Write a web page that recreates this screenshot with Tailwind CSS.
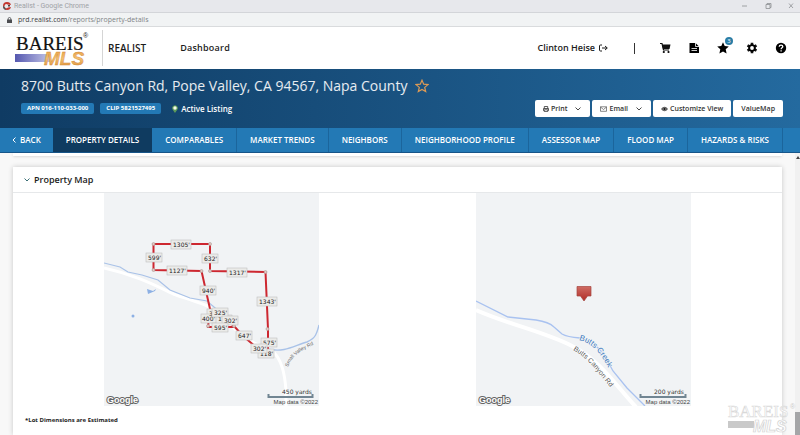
<!DOCTYPE html>
<html lang="en">
<head>
<meta charset="utf-8">
<title>Realist</title>
<script src="https://cdn.jsdelivr.net/npm/@tailwindcss/browser@4"></script>
</head>
<body class="flex h-screen flex-col overflow-hidden bg-[#f8f8f8] font-['Open_Sans','Noto_Sans',sans-serif] text-[9px] leading-3 text-[#1c1c1c]">

<!-- Browser chrome -->
<div class="flex h-[13px] shrink-0 items-center border-b border-[#d3d5d9] bg-[#e7e8ec] pl-[3px] font-[Roboto,sans-serif] text-[7px] text-[#a0a2a6]">
  <svg class="h-2 w-2" viewBox="0 0 8 8"><circle cx="4" cy="4" r="4" fill="#c3372f"/><path d="M3 8A4 4 0 0 1 0 4l2 1z" fill="#4b5b58"/><path d="M8 3L4.500 2.500A2 2 0 1 0 5 5.500L8 5z" fill="#e7e8ec"/><path d="M7 3L5 3v1.500h2z" fill="#4a4546"/></svg>
  <span class="ml-[3px]">Realist - Google Chrome</span>
  <svg class="mr-1 ml-auto h-2 w-[58px]" viewBox="0 0 58 8" fill="none" stroke="#8d8f93" stroke-width=".8"><path d="M4 4h5M51 1.500l4 4.500M55 1.500l-4 4.500"/><path d="M28 2.500h4v4h-4zM29 2.500v-1h4v4h-1"/></svg>
</div>
<div class="flex h-[14px] shrink-0 items-center border-b border-[#d9dbdd] bg-[#f1f3f4] pl-[7px] text-[7px] text-[#3e4043]">
  <svg class="h-[6px] w-[5px]" viewBox="0 0 5 6"><path d="M0 2.500h5V6H0z" fill="#4b4d50"/><path d="M1.200 3V1.800a1.300 1.300 0 0 1 2.600 0V3" fill="none" stroke="#4b4d50" stroke-width=".8"/></svg>
  <span class="ml-[6px]">prd.realist.com</span><span class="text-[#808386]">/reports/property-details</span>
</div>

<!-- Site header -->
<header class="flex h-[42px] shrink-0 items-center bg-white pr-[13px] pl-[14px]">
  <svg class="h-[38px] w-[76px] overflow-visible" viewBox="0 0 76 38" role="img" aria-label="Bareis MLS">
    <defs>
      <linearGradient id="bar"><stop offset="0" stop-color="#5558b0"/><stop offset="1" stop-color="#c6c8e8"/></linearGradient>
      <linearGradient id="gold" x1="0" y1="0" x2="0" y2="1"><stop offset="0" stop-color="#e79a3c"/><stop offset=".5" stop-color="#f3c070"/><stop offset="1" stop-color="#d98b33"/></linearGradient>
    </defs>
    <rect x="1" y="25" width="36" height="8" fill="url(#bar)"/>
    <text x="2" y="21" font-family="Liberation Serif, serif" font-size="19" fill="#111" stroke="#111" stroke-width=".2">BAREIS</text>
    <text x="69" y="9" font-family="Liberation Sans, sans-serif" font-size="7" fill="#222">®</text>
    <text x="30" y="36" font-family="Liberation Sans, sans-serif" font-size="19" font-weight="700" font-style="italic" fill="url(#gold)" stroke="#d38a3a" stroke-width=".4">MLS</text>
  </svg>
  <div class="ml-3 h-9 border-l border-[#d5d5d5]"></div>
  <span class="ml-[5px] text-[10px] font-semibold">REALIST</span>
  <a href="#" class="ml-[34px] text-[9px] font-semibold tracking-wide">Dashboard</a>
  <div class="ml-auto flex items-center">
    <a href="#" class="flex items-center gap-1 text-[9px] font-semibold">Clinton Heise
      <svg class="h-2 w-[9px]" viewBox="0 0 9 8" fill="none" stroke="#1c1c1c" stroke-width="1"><path d="M3 1H1.500a1 1 0 0 0-1 1v4a1 1 0 0 0 1 1H3M3 4h5M6 2l2.300 2L6 6"/></svg>
    </a>
    <span class="mr-6 ml-[26px] h-[11px] border-l border-[#333]"></span>
    <div class="flex items-center gap-[17px]">
      <button aria-label="Cart"><svg class="block h-3 w-3" viewBox="0 0 12 12"><path d="M1 1.500h2L4.500 8H10" fill="none" stroke="#111" stroke-width="1.200"/><path d="M3 2.500h8.500L10.500 7h-6.500z" fill="#111"/><circle cx="4.800" cy="10" r="1.100"/><circle cx="9.500" cy="10" r="1.100"/></svg></button>
      <button aria-label="Reports"><svg class="block h-3 w-3" viewBox="0 0 12 12"><path d="M1.500 1h6l3.500 3.500V11h-9.500z"/><path d="M7.500 1v3.500H11M3.500 6.500h5.500M3.500 8.500h5.500" fill="none" stroke="#fff" stroke-width=".8"/></svg></button>
      <button aria-label="Favorites, 3" class="relative"><svg class="block h-3 w-3" viewBox="0 0 12 12"><path d="M6 .3l1.700 3.800 4.100.4-3.100 2.800.9 4.200L6 9.400l-3.600 2.100.9-4.200L.2 4.500l4.100-.4z"/></svg><span class="absolute -top-[5px] -right-1 h-2 w-2 rounded-full bg-[#2a7da6] text-center text-[6px] leading-2 text-white">3</span></button>
      <button aria-label="Settings"><svg class="block h-3 w-3" viewBox="0 0 12 12"><g stroke="#111" stroke-width="2.600"><path d="M6 .8v10.400M1.500 3.400l9 5.200M1.500 8.600l9-5.200"/></g><circle cx="6" cy="6" r="3.800"/><circle cx="6" cy="6" r="1.900" fill="#fff"/></svg></button>
      <button aria-label="Help"><svg class="block h-3 w-3" viewBox="0 0 12 12"><circle cx="6" cy="6" r="5.200"/><path d="M4.200 4.700C4.300 2.500 7.800 2.600 7.800 4.600 7.800 5.900 6.100 5.700 6.100 7.200M6.100 8.200v1.400" fill="none" stroke="#fff" stroke-width="1.300"/></svg></button>
    </div>
  </div>
</header>

<!-- Property banner -->
<section class="flex h-[59px] shrink-0 bg-linear-to-r from-[#0f3b63] to-[#246a9f] pr-[17px] pl-[21px] text-white">
  <div>
    <div class="mt-[7px] flex items-center gap-2">
      <h1 class="text-[14px] leading-5 font-normal text-white/90">8700 Butts Canyon Rd, Pope Valley, CA 94567, Napa County</h1>
      <button aria-label="Add to favorites"><svg class="block h-[14px] w-[14px]" viewBox="0 0 14 14" fill="none" stroke="#dc9a55" stroke-width="1.200"><path d="M7 1.200l1.700 4 4.300.4-3.300 2.800 1 4.200L7 10.400l-3.700 2.200 1-4.200L1 5.600l4.300-.4z"/></svg></button>
    </div>
    <div class="mt-[7px] flex items-center gap-[6px] text-[6px] leading-[11px] font-bold">
      <span class="rounded-xs bg-[#2379b5] px-[6px]">APN 016-110-033-000</span>
      <span class="rounded-xs bg-[#2379b5] px-[6px]">CLIP 5821527495</span>
      <span class="flex items-center gap-[3px] pl-[5px] text-[8px] font-semibold"><svg class="h-2 w-[6px]" viewBox="0 0 6 8"><path d="M3 8L.6 4.500A2.800 2.800 0 1 1 5.400 4.500z" fill="#5e9b5a"/><circle cx="3" cy="3" r="1.700" fill="#f3fbe9"/></svg>Active Listing</span>
    </div>
  </div>
  <div class="mt-[31px] ml-auto flex gap-[2px] text-[7px] font-semibold text-[#333]">
    <button class="flex h-[17px] items-center gap-[2px] rounded-xs bg-white px-2"><svg class="h-[6px] w-[6px]" viewBox="0 0 6 6" fill="none" stroke="#333" stroke-width=".8"><path d="M1.300 2.500V.5h3.400v2M1 4.500H.5v-2h5v2H5M1.300 3.800h3.400v1.800H1.300z"/></svg>Print<svg class="ml-[5px] h-[6px] w-2" viewBox="0 0 8 6" fill="none" stroke="#333" stroke-width=".9"><path d="M1.500 1.500L4 4l2.500-2.500"/></svg></button>
    <button class="flex h-[17px] items-center gap-[2px] rounded-xs bg-white px-2"><svg class="h-[6px] w-[7px]" viewBox="0 0 7 6" fill="none" stroke="#555" stroke-width=".7"><path d="M.5.800h6v4.500h-6zM.5 1l3 2.500 3-2.500"/></svg>Email<svg class="ml-[5px] h-[6px] w-2" viewBox="0 0 8 6" fill="none" stroke="#333" stroke-width=".9"><path d="M1.500 1.500L4 4l2.500-2.500"/></svg></button>
    <button class="flex h-[17px] items-center gap-[2px] rounded-xs bg-white px-2"><svg class="h-[6px] w-[7px]" viewBox="0 0 7 6"><path d="M0 3Q3.500-1.500 7 3 3.500 7.500 0 3" fill="#555"/><circle cx="3.500" cy="3" r="1.400" fill="#111" stroke="#ddd" stroke-width=".4"/></svg>Customize View</button>
    <button class="flex h-[17px] items-center rounded-xs bg-white px-2">ValueMap</button>
  </div>
</section>

<!-- Section tabs -->
<nav class="flex h-[25px] shrink-0 border-b border-[#17568a] bg-[#2379b5] text-[8px] leading-6 font-semibold whitespace-nowrap text-white">
  <a href="#" class="flex items-center gap-1 px-3"><svg class="h-[6px] w-1" viewBox="0 0 4 6" fill="none" stroke="#fff" stroke-width="1"><path d="M3.500.5L1 3l2.500 2.500"/></svg>BACK</a>
  <a href="#" class="bg-[#0f3b60] px-[13px]">PROPERTY DETAILS</a>
  <a href="#" class="border-r border-[#1b659c] px-[13px]">COMPARABLES</a>
  <a href="#" class="border-r border-[#1b659c] px-[13px]">MARKET TRENDS</a>
  <a href="#" class="border-r border-[#1b659c] px-[13px]">NEIGHBORS</a>
  <a href="#" class="border-r border-[#1b659c] px-[13px]">NEIGHBORHOOD PROFILE</a>
  <a href="#" class="border-r border-[#1b659c] px-[13px]">ASSESSOR MAP</a>
  <a href="#" class="border-r border-[#1b659c] px-[13px]">FLOOD MAP</a>
  <a href="#" class="border-r border-[#1b659c] px-[13px]">HAZARDS &amp; RISKS</a>
</nav>

<!-- Content -->
<main class="flex min-h-0 flex-1">
  <div class="flex flex-1 flex-col px-[13px]">
    <div class="h-[3px] shrink-0 bg-white shadow-sm"></div>
    <section class="mt-[11px] flex-1 bg-white shadow-[0_0_5px_rgba(0,0,0,0.2)]">
      <h2 class="flex h-[26px] items-center gap-[3px] border-b border-[#e6e8ea] pl-[10px] text-[9px] font-semibold"><svg class="h-[6px] w-2" viewBox="0 0 8 6" fill="none" stroke="#3b7076" stroke-width="1"><path d="M1.500 1.500L4 4l2.500-2.500"/></svg>Property Map</h2>
      <div class="grid grid-cols-2 justify-items-center px-3">
        <svg class="h-[213px] w-[215px]" viewBox="104 193 215 213" role="img" aria-label="Lot dimensions map">
          <rect x="104" y="193" width="215" height="213" fill="#f1f3f5"/>
          <g fill="none">
            <path d="M104 268C140 276 160 288 176 295C194 301 211 305 222 316C236 332 252 345 270 349C283 358 285 378 286 390V406" stroke="#fff" stroke-width="3"/>
            <path d="M104 263L120 267 128 272 142 275 158 280 170 290 190 298 207 301 221 313" stroke="#a9c2e8" stroke-width="1.200"/>
            <path d="M268 349C285 353 295 345 307 342C316 338 317 333 319 325" stroke="#a9c2e8" stroke-width="1.400"/>
          </g>
          <path d="M147 289l6 2 3-2-1 2-7 3z" fill="#8db0e4"/><circle cx="133" cy="316" r="1.500" fill="#8db0e4"/>
          <path d="M201.500 271L210 309 223 318 234 326 243 336 256 347 268 352V329L265.500 272 210 271V244H153.500V270L201.500 271" fill="none" stroke="#cd2730" stroke-width="2"/>
          <path d="M210 309L208 327H234" fill="none" stroke="#cd2730" stroke-width="2"/>
          <g fill="#e5c6c2" stroke="#a89b96" stroke-width=".6"><circle cx="153.500" cy="244" r="1.500"/><circle cx="210" cy="244" r="1.500"/><circle cx="153.500" cy="270" r="1.500"/><circle cx="201.500" cy="271" r="1.500"/><circle cx="210" cy="271" r="1.500"/><circle cx="265.500" cy="272" r="1.500"/><circle cx="267.500" cy="329" r="1.500"/><circle cx="208" cy="326" r="1.500"/><circle cx="234" cy="326" r="1.500"/></g>
          <g fill="#ebebe9" stroke="#bfc0c0" stroke-width=".6">
            <rect x="171" y="240" width="20" height="9"/><rect x="146" y="253" width="16" height="9"/><rect x="202" y="254" width="16" height="9"/><rect x="167" y="266" width="20" height="9"/><rect x="227" y="268" width="20" height="9"/><rect x="200" y="286" width="16" height="9"/><rect x="257" y="297" width="20" height="9"/><rect x="207" y="309" width="16" height="9"/><rect x="201" y="314" width="16" height="9"/><rect x="216" y="315" width="16" height="9"/>
          </g>
          <g font-family="DejaVu Sans, sans-serif" font-size="6" fill="#222" stroke="none">
            <text x="173" y="247">1305'</text><text x="148" y="260">599'</text><text x="204" y="261">632'</text><text x="169" y="273">1127'</text><text x="229" y="275">1317'</text><text x="202" y="293">940'</text><text x="259" y="304">1343'</text><text x="209" y="316">3</text><text x="202" y="321">400'</text><text x="218" y="321">1</text>
          </g>
          <g font-family="DejaVu Sans, sans-serif" font-size="6" fill="#222">
            <rect x="212" y="308" width="16" height="9" fill="#ebebe9" stroke="#bfc0c0" stroke-width=".6"/><text x="214" y="315">325'</text>
            <rect x="222" y="316" width="16" height="9" fill="#ebebe9" stroke="#bfc0c0" stroke-width=".6"/><text x="224" y="323">302'</text>
            <rect x="212" y="323" width="16" height="9" fill="#ebebe9" stroke="#bfc0c0" stroke-width=".6"/><text x="214" y="330">595'</text>
            <rect x="236" y="331" width="16" height="9" fill="#ebebe9" stroke="#bfc0c0" stroke-width=".6"/><text x="238" y="338">647'</text>
            <rect x="258" y="349" width="16" height="9" fill="#ebebe9" stroke="#bfc0c0" stroke-width=".6"/><text x="260" y="356">118'</text>
            <rect x="261" y="338" width="16" height="9" fill="#ebebe9" stroke="#bfc0c0" stroke-width=".6"/><text x="263" y="345">575'</text>
            <rect x="251" y="344" width="16" height="9" fill="#ebebe9" stroke="#bfc0c0" stroke-width=".6"/><text x="253" y="351">302'</text>
          </g>
          <path id="valley" d="M288 367C292 356 300 350 318 343" fill="none"/>
          <text font-family="Liberation Sans, sans-serif" font-size="5" fill="#666"><textPath href="#valley">Small Valley Rd</textPath></text>
          <text x="107" y="403" font-family="Liberation Sans, sans-serif" font-size="9" font-weight="700" fill="#fff" stroke="#666" stroke-width="2" paint-order="stroke">Google</text>
          <text x="282" y="394" font-family="DejaVu Sans, sans-serif" font-size="6" fill="#333">450 yards</text>
          <path d="M268.500 394v3h44v-3" fill="none" stroke="#718592" stroke-width="2"/>
          <text x="318" y="404" text-anchor="end" font-family="Liberation Sans, sans-serif" font-size="6" fill="#444">Map data ©2022</text>
        </svg>
        <svg class="h-[213px] w-[215px]" viewBox="476 193 215 213" role="img" aria-label="Location map">
          <rect x="476" y="193" width="215" height="213" fill="#f1f3f5"/>
          <path d="M476 310C510 325 545 332 572 346C600 360 617 387 636 407" fill="none" stroke="#fff" stroke-width="4"/>
          <path d="M476 301L508 317 536 320Q549 322 554 327L562 334Q567 337 580 338C600 343 606 358 613 371L627 388 645 406" fill="none" stroke="#a9c2f0" stroke-width="1.300"/>
          <defs><linearGradient id="pin" x1="0" y1="0" x2="0" y2="1"><stop offset="0" stop-color="#cf6b63"/><stop offset="1" stop-color="#b02b25"/></linearGradient></defs>
          <path d="M577 286.500h14v9.500h-3.500L584 301l-3.500-5H577z" fill="url(#pin)" stroke="#a5453f" stroke-width=".7"/>
          <path id="creek" d="M579 340C592 343 600 352 609 369" fill="none"/>
          <text font-family="Liberation Sans, sans-serif" font-size="8" fill="#3b79bd" stroke="#f1f3f5" stroke-width="1.500" paint-order="stroke"><textPath href="#creek">Butts Creek</textPath></text>
          <path id="road" d="M573 350C586 357 595 368 613 391" fill="none"/>
          <text font-family="Liberation Sans, sans-serif" font-size="7" fill="#555" stroke="#fff" stroke-width="1" paint-order="stroke"><textPath href="#road">Butts Canyon Rd</textPath></text>
          <text x="479" y="403" font-family="Liberation Sans, sans-serif" font-size="9" font-weight="700" fill="#fff" stroke="#666" stroke-width="2" paint-order="stroke">Google</text>
          <text x="654" y="394" font-family="DejaVu Sans, sans-serif" font-size="6" fill="#333">200 yards</text>
          <path d="M640.500 394v3h45v-3" fill="none" stroke="#718592" stroke-width="2"/>
          <text x="690" y="404" text-anchor="end" font-family="Liberation Sans, sans-serif" font-size="6" fill="#444">Map data ©2022</text>
        </svg>
      </div>
      <p class="mt-2 pl-3 text-[6px] leading-3 font-bold">*Lot Dimensions are Estimated</p>
    </section>
  </div>
  <div class="flex w-[5px] flex-col items-center bg-[#f1f1f1]">
    <svg class="mt-[3px] h-[3px] w-1" viewBox="0 0 4 3"><path d="M0 3L2 0l2 3z" fill="#444"/></svg>
    <div class="mt-auto h-[23px] w-full bg-[#a5a6a8]"></div>
  </div>
</main>

<!-- Watermark -->
<svg class="absolute right-0 bottom-0 h-[36px] w-[74px]" viewBox="0 0 74 36" aria-hidden="true">
  <text x="2" y="18" font-family="Liberation Serif, serif" font-size="17" fill="#fff" stroke="#d9d9d9" stroke-width=".6">BAREIS</text>
  <text x="64" y="10" font-family="Liberation Sans, sans-serif" font-size="7" fill="#ccc">®</text>
  <rect x="2" y="22" width="26" height="7" fill="#c9c9c9"/>
  <text x="27" y="33" font-family="Liberation Sans, sans-serif" font-size="16" font-weight="700" font-style="italic" fill="#fff" stroke="#d2d2d2" stroke-width=".7">MLS</text>
</svg>
</body>
</html>
